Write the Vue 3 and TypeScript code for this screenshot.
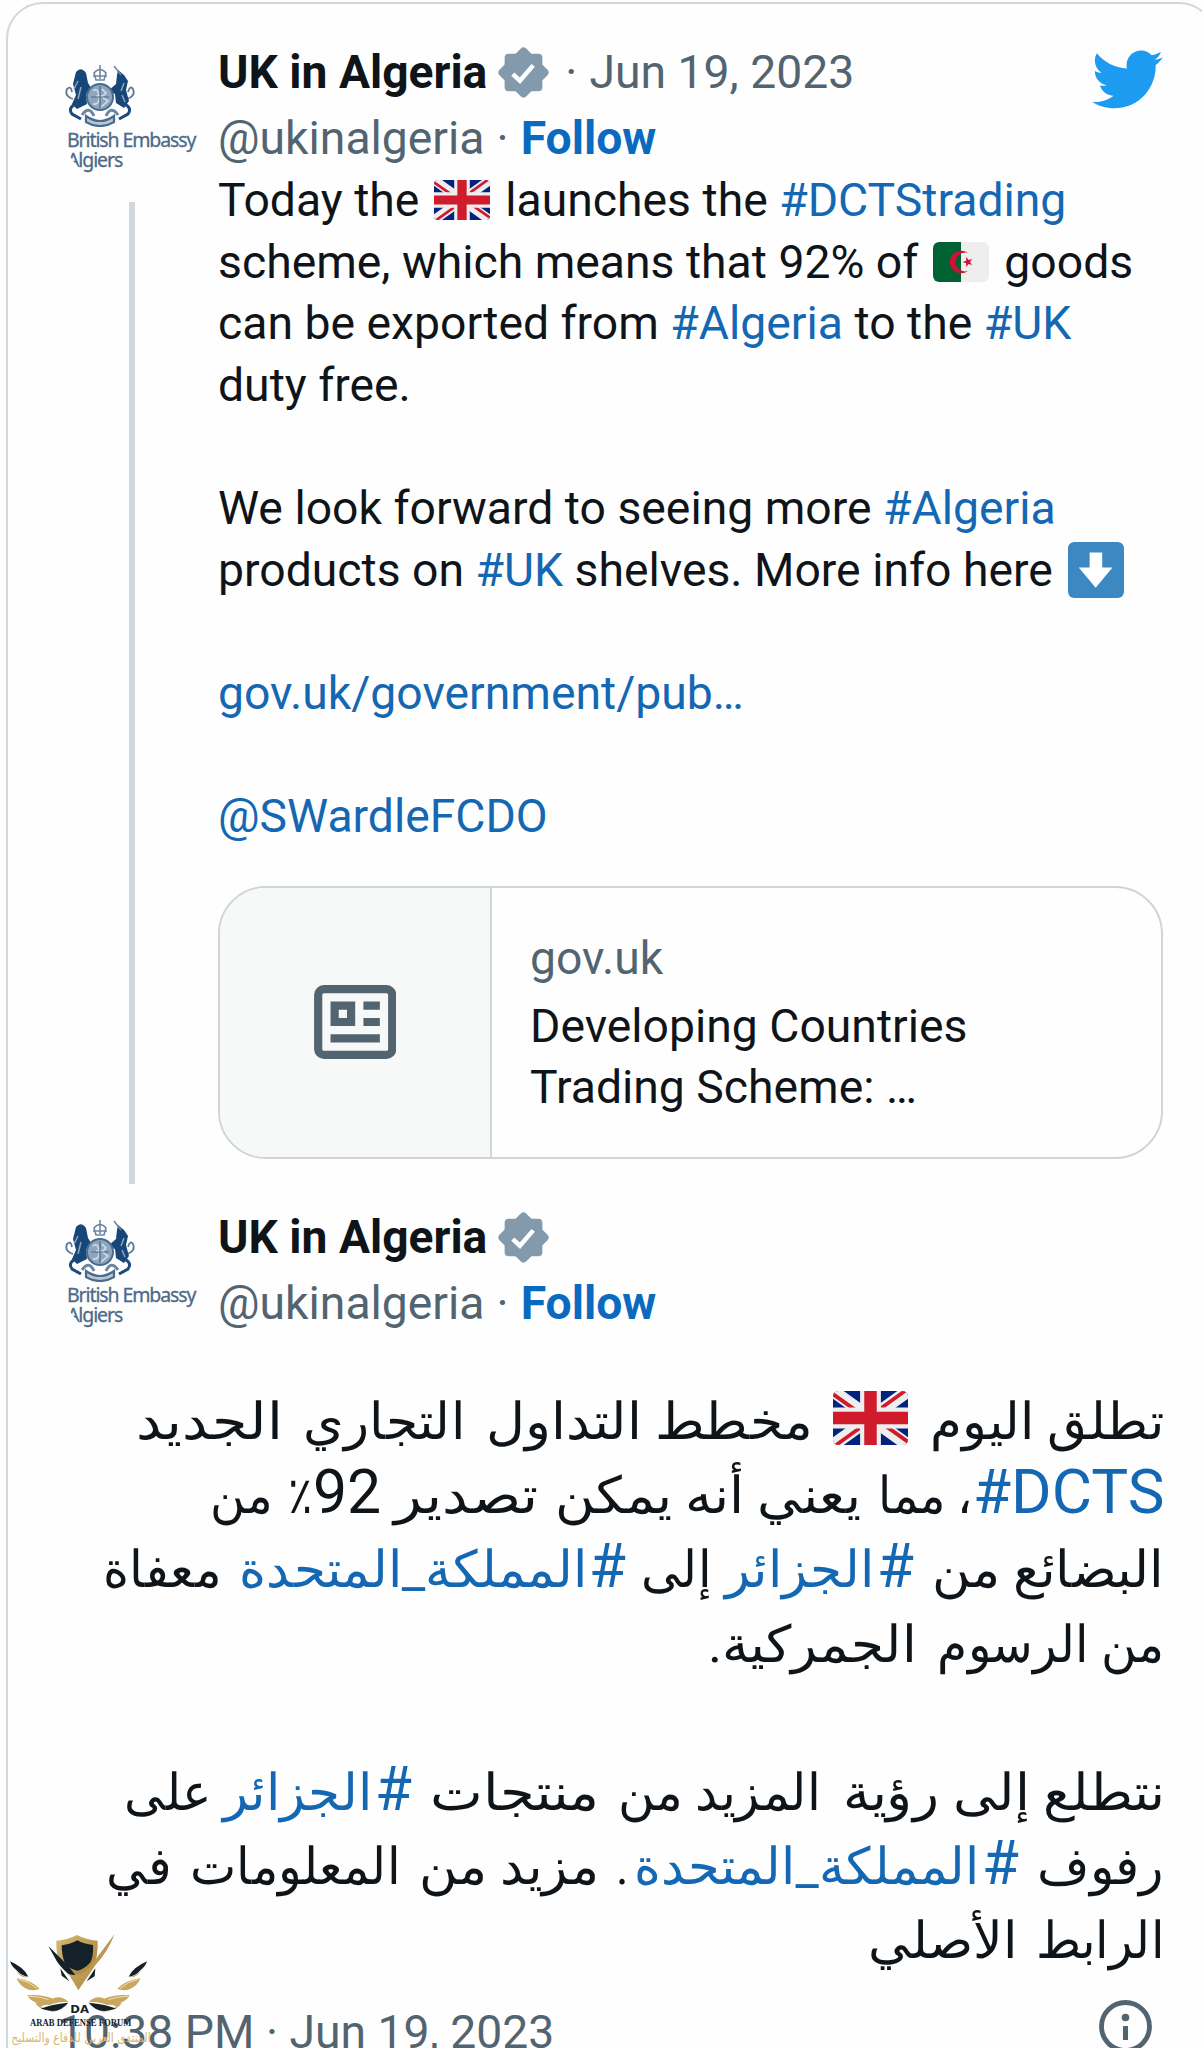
<script setup lang="ts">
import { ref, onMounted } from 'vue'

type Kind = 'text' | 'link' | 'uk' | 'dz' | 'down'

interface Segment {
  kind: Kind
  text?: string
}

// width is the measure the run is set to, gap the space after it
interface Run {
  text?: string
  width: number
  gap?: number
  link?: boolean
  latin?: boolean
}

const t = (text: string): Segment => ({ kind: 'text', text })
const a = (text: string): Segment => ({ kind: 'link', text })

const english: Segment[][] = [
  [t('Today the '), { kind: 'uk' }, t(' launches the '), a('#DCTStrading')],
  [t('scheme, which means that 92% of '), { kind: 'dz' }, t(' goods')],
  [t('can be exported from '), a('#Algeria'), t(' to the '), a('#UK')],
  [t('duty free.')],
  [],
  [t('We look forward to seeing more '), a('#Algeria')],
  [t('products on '), a('#UK'), t(' shelves. More info here '), { kind: 'down' }],
  [],
  [a('gov.uk/government/pub…')],
  [],
  [a('@SWardleFCDO')],
]

const arabic: Run[][] = [
  [
    { text: 'تطلق اليوم', width: 230, gap: 24 },
    { width: 75, gap: 22 },
    { text: 'مخطط التداول', width: 323, gap: 25 },
    { text: 'التجاري', width: 158, gap: 24 },
    { text: 'الجديد', width: 143 },
  ],
  [
    { text: '#DCTS', width: 187, gap: 5, link: true, latin: true },
    { text: '، مما', width: 90, gap: 22 },
    { text: 'يعني أنه يمكن', width: 302, gap: 20 },
    { text: 'تصدير', width: 140, gap: 17 },
    { text: '92', width: 64, gap: 5, latin: true },
    { text: '٪', width: 20, gap: 20 },
    { text: 'من', width: 58 },
  ],
  [
    { text: 'البضائع من', width: 228, gap: 22 },
    { text: '#', width: 33, gap: 7, link: true, latin: true },
    { text: 'الجزائر', width: 145, gap: 18 },
    { text: 'إلى', width: 66, gap: 19 },
    { text: '#', width: 33, gap: 6, link: true, latin: true },
    { text: 'المملكة_المتحدة', width: 344, gap: 22, link: true },
    { text: 'معفاة', width: 114 },
  ],
  [
    { text: 'من الرسوم', width: 223, gap: 24 },
    { text: 'الجمركية.', width: 205 },
  ],
  [],
  [
    { text: 'نتطلع إلى رؤية', width: 318, gap: 25 },
    { text: 'المزيد من', width: 199, gap: 23 },
    { text: 'منتجات', width: 165, gap: 22 },
    { text: '#', width: 33, gap: 7, link: true, latin: true },
    { text: 'الجزائر', width: 145, gap: 16, link: true },
    { text: 'على', width: 83 },
  ],
  [
    { text: 'رفوف', width: 123, gap: 22 },
    { text: '#', width: 33, gap: 7, link: true, latin: true },
    { text: 'المملكة_المتحدة', width: 341, gap: 9, link: true },
    { text: '.', width: 9, gap: 21 },
    { text: 'مزيد من', width: 176, gap: 23 },
    { text: 'المعلومات', width: 206, gap: 23 },
    { text: 'في', width: 61 },
  ],
  [
    { text: 'الرابط', width: 124, gap: 23 },
    { text: 'الأصلي', width: 145 },
  ],
]
arabic[2][2].link = true

const arabicEl = ref<HTMLElement | null>(null)

onMounted(() => {
  // Set each run to its measure, side bearings included
  arabicEl.value?.querySelectorAll<HTMLElement>('.run-text').forEach((el) => {
    const box = el.parentElement
    if (!box) return
    el.style.transform = `translateX(2px) scaleX(${(box.offsetWidth + 4) / el.offsetWidth})`
  })
})
</script>

<template>
  <div class="page">
    <svg class="defs" aria-hidden="true">
      <symbol id="uk" viewBox="0 0 36 26" preserveAspectRatio="none">
        <clipPath id="ukclip"><rect width="36" height="26" rx="2.5" /></clipPath>
        <g clip-path="url(#ukclip)">
          <rect width="36" height="26" fill="#00247d" />
          <path d="M0 0L36 26M36 0L0 26" stroke="#eee" stroke-width="6" />
          <path d="M0 1.5L14 11.5M36 24.5L22 14.5M34.5 0L20 10.5M1.5 26L16 15.5" stroke="#cf1b2b" stroke-width="1.8" />
          <path d="M18 0V26M0 13H36" stroke="#eee" stroke-width="10" />
          <path d="M18 0V26M0 13H36" stroke="#cf1b2b" stroke-width="6" />
        </g>
      </symbol>
      <symbol id="dz" viewBox="0 0 36 26" preserveAspectRatio="none">
        <path d="M4 0H18V26H4A4 4 0 0 1 0 22V4A4 4 0 0 1 4 0Z" fill="#006233" />
        <path d="M18 0H32A4 4 0 0 1 36 4V22A4 4 0 0 1 32 26H18Z" fill="#eee" />
        <path d="M22.5 7.2A7.3 7.3 0 1 0 22.5 18.8A6.1 6.1 0 1 1 22.5 7.2Z" fill="#d21034" />
        <path d="M19 13L21.3 12.2L21.4 9.8L22.9 11.7L25.2 11L23.8 13L25.2 15L22.9 14.3L21.4 16.2L21.3 13.8Z" fill="#d21034" />
      </symbol>
      <symbol id="down" viewBox="0 0 36 36">
        <rect width="36" height="36" rx="4" fill="#3b88c3" />
        <path d="M13.9 6.8H22V16.4H28.6L17.8 29.4L6.9 16.4H13.9Z" fill="#fff" />
      </symbol>
      <symbol id="verified" viewBox="0 0 50 50">
        <rect x="6.5" y="6.5" width="37" height="37" rx="4" fill="#829aab" />
        <rect x="6.5" y="6.5" width="37" height="37" rx="4" fill="#829aab" transform="rotate(45 25 25)" />
        <path d="M14.5 26.5L21.5 33L34.5 18" fill="none" stroke="#fff" stroke-width="4.4" />
      </symbol>
      <symbol id="crest" viewBox="0 0 72 62">
        <g fill="none" stroke="#1d4b7d" stroke-width="2.2">
          <path d="M30 8Q36 1 42 8L40 15H32ZM36 0V14M29 11H43" stroke="#6d87a3" stroke-width="1.6" />
          <path d="M9 34Q0 31 3 24Q7 20 8 27M63 34Q72 31 69 24Q66 20 64 27" stroke="#5b7898" stroke-width="1.8" />
          <path d="M14 38Q3 42 8 49L17 54M58 38Q69 42 64 49L55 54" stroke-width="3" />
          <path d="M18 50Q25 40 30 51M54 50Q47 40 42 51" stroke="#6d87a3" stroke-width="3" />
          <path d="M22 51Q36 61 50 51V57Q36 65 22 57Z" fill="#b9c8d6" stroke="#496b8d" />
        </g>
        <path d="M12 7Q17 1 22 8L24 18L29 26L22 29L23 39L13 44L8 39L12 30L9 19Z" fill="#174679" />
        <path d="M54 5L60 10L64 16L62 25L65 36L60 43L52 38L51 29L44 26L52 19L53 10Z" fill="#174679" />
        <path d="M50 1L57 10" stroke="#6d87a3" stroke-width="1.5" />
        <path d="M14 16L10 24M17 22L14 34M60 18L57 26M58 30L61 37" stroke="#8ea5bb" stroke-width="1.5" />
        <circle cx="36" cy="32" r="13" fill="#8ea5bb" stroke="#486c91" stroke-width="2" />
        <path d="M29 26Q34 22 35 31T29 39M38 24L42 28L38 32L44 36L37 42M32 31H40" fill="none" stroke="#d3dde6" stroke-width="1.6" />
        <path d="M27 32H45M36 21V43" stroke="#486c91" stroke-width="1.2" />
      </symbol>
    </svg>

    <article class="card">
      <section class="tweet">
        <div class="rail">
          <div class="avatar">
            <svg class="crest"><use href="#crest" /></svg>
            <span class="embassy">British Embassy</span>
            <span class="embassy second">Algiers</span>
          </div>
          <div class="thread"></div>
        </div>
        <div class="content">
          <header class="head">
            <div class="row">
              <b class="name">UK in Algeria</b>
              <svg class="verified"><use href="#verified" /></svg>
              <span class="dot wide">·</span>
              <span class="muted">Jun 19, 2023</span>
            </div>
            <div class="row handle">
              <span class="muted">@ukinalgeria</span>
              <span class="dot">·</span>
              <b class="follow">Follow</b>
            </div>
            <svg class="bird" viewBox="0 0 24 24">
              <path fill="#1d9bf0" d="M23.643 4.937c-.835.37-1.732.62-2.675.733.962-.576 1.7-1.49 2.048-2.578-.9.534-1.897.922-2.958 1.13-.85-.904-2.06-1.47-3.4-1.47-2.572 0-4.658 2.086-4.658 4.66 0 .364.042.718.12 1.06-3.873-.195-7.304-2.05-9.602-4.868-.4.69-.63 1.49-.63 2.342 0 1.616.823 3.043 2.072 3.878-.764-.025-1.482-.234-2.11-.583v.06c0 2.257 1.605 4.14 3.737 4.568-.392.106-.803.162-1.227.162-.3 0-.593-.028-.877-.082.593 1.85 2.313 3.198 4.352 3.234-1.595 1.25-3.604 1.995-5.786 1.995-.376 0-.747-.022-1.112-.065 2.062 1.323 4.51 2.093 7.14 2.093 8.57 0 13.255-7.098 13.255-13.254 0-.2-.005-.402-.014-.602.91-.658 1.7-1.477 2.323-2.41z" />
            </svg>
          </header>
          <div class="body">
            <div v-for="(line, i) in english" :key="i" class="line">
              <template v-for="(s, j) in line" :key="j"><svg v-if="!s.text" :class="['emoji', s.kind]"><use :href="'#' + s.kind" /></svg><span v-else :class="s.kind">{{ s.text }}</span></template>
            </div>
          </div>
          <div class="preview">
            <div class="thumb">
              <svg viewBox="0 0 20 18" class="news">
                <rect x="1" y="1" width="18" height="16" rx="1.4" fill="none" stroke="#536471" stroke-width="2" />
                <path d="M5 5H9V9H5ZM12 5H16M12 9H16M4 13H16" fill="none" stroke="#536471" stroke-width="2" />
              </svg>
            </div>
            <div class="info">
              <div class="muted domain">gov.uk</div>
              <div>Developing Countries</div>
              <div>Trading Scheme: …</div>
            </div>
          </div>
        </div>
      </section>

      <section class="tweet reply">
        <div class="avatar">
          <svg class="crest"><use href="#crest" /></svg>
          <span class="embassy">British Embassy</span>
          <span class="embassy second">Algiers</span>
        </div>
        <header class="head">
          <div class="row">
            <b class="name">UK in Algeria</b>
            <svg class="verified"><use href="#verified" /></svg>
          </div>
          <div class="row handle">
            <span class="muted">@ukinalgeria</span>
            <span class="dot">·</span>
            <b class="follow">Follow</b>
          </div>
        </header>
      </section>

      <div class="arabic" dir="rtl" ref="arabicEl">
        <div v-for="(runs, i) in arabic" :key="i" class="runs">
          <div
            v-for="(r, j) in runs"
            :key="j"
            :class="['run', { link: r.link, latin: r.latin }]"
            :style="{ width: r.width + 'px', marginLeft: (r.gap ?? 0) + 'px' }"
          >
            <span v-if="r.text" class="run-text" :dir="r.latin ? 'ltr' : 'rtl'">{{ r.text }}</span>
            <svg v-else class="run-flag"><use href="#uk" /></svg>
          </div>
        </div>
      </div>

      <footer class="foot">
        <span class="time">10:38 PM · Jun 19, 2023</span>
        <svg class="about" viewBox="0 0 53 53">
          <circle cx="26.5" cy="26.5" r="24" fill="none" stroke="#536471" stroke-width="4.8" />
          <circle cx="26.5" cy="17.5" r="3.8" fill="#536471" />
          <path d="M26.5 26V40" stroke="#536471" stroke-width="5" />
        </svg>
      </footer>
    </article>

    <!-- forum badge over the bottom corner -->
    <svg class="forum" viewBox="0 0 480 354">
      <defs>
        <linearGradient id="gold" x1="0" y1="0" x2="1" y2="1">
          <stop offset="0" stop-color="#d9bb74" />
          <stop offset="1" stop-color="#a47b30" />
        </linearGradient>
      </defs>
      <path d="M169 32Q205 29 231 15Q257 29 293 32Q294 80 282 106Q263 133 231 152Q195 130 178 100Q168 70 169 32Z" fill="url(#gold)" />
      <path d="M185 46Q212 43 232 31Q251 42 279 45Q281 83 270 98Q253 117 232 122Q206 116 194 98Q185 75 185 46Z" fill="#14212b" />
      <path d="M145 48L205 108Q222 130 232 142L216 140Q184 116 170 93Z" fill="#14212b" />
      <path d="M344 12Q322 68 287 104L235 181L206 132Q250 145 281 95Z" fill="url(#gold)" />
      <path d="M181 115L208 154L185 137ZM286 115L260 154L284 139Z" fill="#14212b" />
      <g id="wing">
        <path d="M30 94Q72 112 85 140Q64 138 49 120Q35 110 30 94Z" fill="#14212b" />
        <path d="M44 116Q56 136 84 141Q60 146 44 116ZM50 145Q92 150 119 176Q94 187 75 174Q57 165 50 145ZM82 196Q123 191 158 206Q138 222 111 219Q92 214 82 196ZM145 213Q178 189 205 215Q166 216 150 225Q133 222 122 230Q138 240 188 228Q172 249 151 244Q116 238 106 219Z" fill="#c9a85e" />
        <path d="M122 236Q153 222 205 218Q179 250 144 241Z" fill="#14212b" />
        <path d="M57 148Q87 154 111 175M88 199Q120 199 146 209" fill="none" stroke="#f0dfb4" stroke-width="3" />
      </g>
      <use href="#wing" transform="translate(471 0) scale(-1 1)" />
      <text x="211" y="250" textLength="56" lengthAdjust="spacingAndGlyphs" class="da">DA</text>
      <text x="90" y="287" textLength="304" lengthAdjust="spacingAndGlyphs" class="forum-en">ARAB DEFENSE FORUM</text>
      <text x="34" y="335" textLength="418" lengthAdjust="spacingAndGlyphs" class="forum-ar">المنتدى العربي للدفاع والتسليح</text>
    </svg>
  </div>
</template>

<style>
body {
  background: #fefefe;
}
</style>

<style scoped>
.page {
  position: relative;
  width: 1202px;
  height: 2048px;
  overflow: hidden;
  padding: 2px 0 0 6px;
  box-sizing: border-box;
  font: 46.3px/61.65px Roboto, 'Noto Sans', sans-serif;
  color: #0f1419;
}
.defs { position: absolute; width: 0; height: 0; }
.card {
  width: 1210px;
  height: 2150px;
  box-sizing: border-box;
  border: 2.5px solid #cfd9de;
  border-radius: 37px;
  padding: 38px 50px 0;
  background: #fefefe;
}
.tweet { display: flex; gap: 12px; }
.rail { display: flex; flex-direction: column; align-items: center; }
.thread { width: 6px; flex: 1; margin-top: 12px; background: #cfd9de; }
.avatar {
  width: 148px;
  height: 148px;
  flex: none;
  box-sizing: border-box;
  padding: 23px 0 0 6px;
  border-radius: 50%;
  overflow: hidden;
  font: 19.5px/20px 'Noto Sans', sans-serif;
  color: #4c6a88;
  -webkit-text-stroke: 0.3px #4c6a88;
}
.crest { display: block; width: 72px; height: 62px; }
.embassy { display: block; margin-top: 3px; padding-left: 3px; white-space: nowrap; letter-spacing: -1.1px; }
.embassy.second { margin-top: 0; }
.content { width: 945px; height: 1142px; display: flex; flex-direction: column; }
.head { height: 128px; flex: none; position: relative; }
.row { display: flex; align-items: center; height: 61.6px; white-space: pre; }
.handle { margin-top: 4px; }
.name { font-size: 46.2px; }
.verified { width: 51px; height: 51px; margin-left: 11px; }
.dot { color: #536471; margin: 0 12px; }
.dot.wide { margin: 0 12px 0 16px; }
.muted { color: #536471; }
.follow { color: #0a6abf; }
.bird { position: absolute; right: -1px; top: 0; width: 75px; height: 75px; }
.line { height: 61.65px; white-space: pre; }
.link { color: #1467b3; }
.emoji { display: inline-block; width: 56px; height: 40px; margin: 0 3.5px; vertical-align: -4px; }
.emoji.down { height: 56px; margin-left: 4px; vertical-align: -12px; }
.preview {
  display: flex;
  flex: none;
  box-sizing: border-box;
  height: 273px;
  margin-top: 37.5px;
  border: 2px solid #cfd5d8;
  border-radius: 48px;
  overflow: hidden;
}
.thumb {
  display: flex;
  align-items: center;
  justify-content: center;
  width: 270px;
  border-right: 2px solid #cfd5d8;
  background: #f7f9f9;
}
.news { width: 82.4px; height: 74px; }
.info { padding: 40px 0 0 38px; }
.domain { margin-bottom: 6.5px; }
.reply { padding-top: 13px; height: 148px; }
.reply .head { margin-top: 10px; }
.arabic { margin-top: 36px; width: 1104px; font-size: 61.6px; line-height: 74.2px; }
.runs { display: flex; align-items: baseline; height: 74.2px; }
/* strut that keeps the baseline the same on every line */
.runs::before { content: '\200b'; width: 0; }
.run { flex: none; font-size: 51.4px; white-space: nowrap; }
.run.latin { font-size: 61.6px; }
.run-text { display: inline-block; transform-origin: right; }
.run-flag { display: inline-block; width: 75px; height: 54px; vertical-align: -6px; }
.foot { display: flex; justify-content: space-between; width: 1094px; margin-top: 18px; color: #536471; }
.time { margin-top: 9px; }
.about { width: 53px; height: 53px; margin-top: 7px; }
.forum { position: absolute; left: 0; top: 1930px; width: 160px; height: 118px; }
.da { font: bold 31px 'DejaVu Sans', sans-serif; fill: #14212b; }
.forum-en { font: bold 34px 'Liberation Serif', serif; fill: #14212b; }
.forum-ar { font: 38px 'DejaVu Sans', sans-serif; fill: #d9b871; }
</style>
